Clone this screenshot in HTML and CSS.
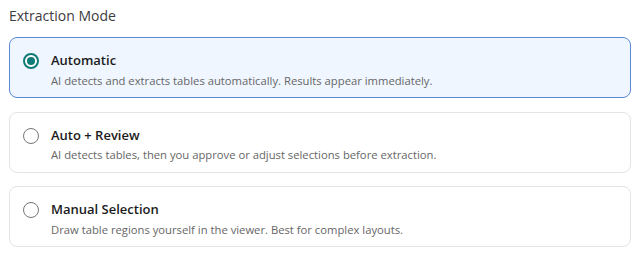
FILE: index.html
```html
<!DOCTYPE html>
<html>
<head>
<meta charset="utf-8">
<link rel="stylesheet" href="styles.css">
</head>
<body>
<div class="panel">
  <div class="heading">Extraction Mode</div>
  <div class="options">
    <label class="option selected">
      <span class="radio"><span class="dot"></span></span>
      <span class="text">
        <span class="title">Automatic</span>
        <span class="desc">AI detects and extracts tables automatically. Results appear immediately.</span>
      </span>
    </label>
    <label class="option">
      <span class="radio"></span>
      <span class="text">
        <span class="title">Auto + Review</span>
        <span class="desc">AI detects tables, then you approve or adjust selections before extraction.</span>
      </span>
    </label>
    <label class="option">
      <span class="radio"></span>
      <span class="text">
        <span class="title">Manual Selection</span>
        <span class="desc">Draw table regions yourself in the viewer. Best for complex layouts.</span>
      </span>
    </label>
  </div>
</div>
</body>
</html>
```
FILE: styles.css
```css
html, body {
  margin: 0;
  padding: 0;
  background: #ffffff;
}
body {
  font-family: "Open Sans", "Noto Sans", sans-serif;
}
.panel {
  padding: 6px 9px 0 9px;
}
.heading {
  font-size: 14px;
  font-weight: 500;
  color: #3c3c3c;
  line-height: 20px;
  margin-bottom: 11px;
}
.options {
  display: flex;
  flex-direction: column;
  gap: 13.5px;
}
.option {
  display: flex;
  align-items: flex-start;
  gap: 12px;
  height: 61px;
  box-sizing: border-box;
  padding: 15px 12px 0 13px;
  border: 1px solid #e4e4e4;
  border-radius: 8px;
  background: #ffffff;
}
.option.selected {
  border-color: #5a8bd2;
  background: #eff6ff;
}
.radio {
  width: 16px;
  height: 16px;
  box-sizing: border-box;
  border: 1px solid #767676;
  border-radius: 50%;
  display: flex;
  align-items: center;
  justify-content: center;
  flex: none;
  background: #ffffff;
}
.selected .radio {
  border: 2px solid #0f7b77;
}
.dot {
  width: 8px;
  height: 8px;
  border-radius: 50%;
  background: #0f7b77;
}
.text {
  display: flex;
  flex-direction: column;
}
.title {
  font-size: 13px;
  font-weight: 600;
  color: #1b1b1b;
  line-height: 17px;
  margin-top: -1px;
}
.desc {
  font-size: 11.25px;
  color: #666666;
  line-height: 18px;
  margin-top: 2.5px;
}
```
